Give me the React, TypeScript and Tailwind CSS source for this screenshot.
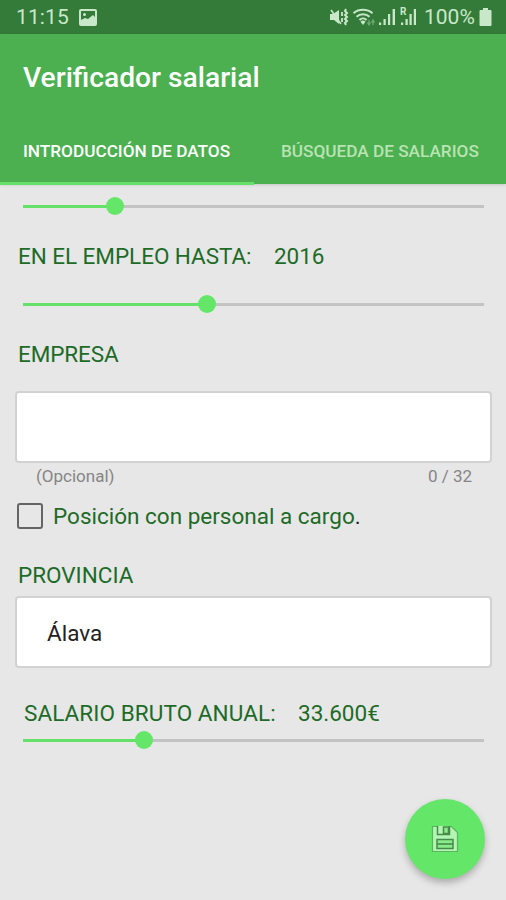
import React from 'react';

type SliderProps = {
  value: number;
  className?: string;
};

/* Thin track with a round thumb, value is a percentage */
function Slider({ value, className = '' }: SliderProps) {
  return (
    <div className={`ml-[23px] mr-[22px] grid h-[18px] items-center ${className}`}>
      <div className="col-start-1 row-start-1 h-[3px] bg-[#c3c3c3]">
        <div className="h-full bg-[#65e069]" style={{ width: `${value}%` }} />
      </div>
      <div className="relative col-start-1 row-start-1 h-[18px]">
        <span
          className="absolute top-0 size-[18px] -translate-x-1/2 rounded-full bg-[#64e668]"
          style={{ left: `${value}%` }}
        />
      </div>
    </div>
  );
}

function StatusBar() {
  return (
    <div className="flex h-[34px] items-center bg-[#347a39] pl-4 pr-[14px] text-[#c9e8ca]">
      <span className="w-[53px] whitespace-nowrap text-[21px] leading-none tracking-[0.1px]">11:15</span>
      {/* Picture notification */}
      <svg className="ml-[10px]" width="18" height="17" viewBox="0 0 18 17" fill="none">
        <rect x="1" y="1" width="16" height="15" rx="1" stroke="currentColor" strokeWidth="2" />
        <path d="M2 11l4-2 3 1 5-4 3 3v6H2z" fill="currentColor" />
        <circle cx="5.5" cy="5.5" r="1.5" fill="currentColor" />
      </svg>

      <div className="ml-auto flex items-center">
        {/* Muted, vibrating */}
        <svg width="19" height="18" viewBox="0 0 19 18" fill="none">
          <path d="M0 6h3l6-4v14l-5-4H0z" fill="currentColor" />
          <path d="M1 2l10 14" stroke="currentColor" strokeWidth="1.6" />
          <path d="M12 4v4M12 10v4" stroke="currentColor" strokeWidth="1.8" />
          <path d="M16 1l-1 2 2 2-2 2 2 2-2 2 2 2-2 2 1 2" stroke="currentColor" strokeWidth="2" />
        </svg>
        {/* Wifi */}
        <svg className="ml-[4px]" width="23" height="18" viewBox="0 0 23 18" fill="none">
          <path
            d="M.5 5.2c5.3-4.5 13.7-4.5 19 0M3.5 8.7c3.7-3.3 9.3-3.300 13 0M6.500 12c2-2 5-2 7 0"
            stroke="currentColor"
            strokeWidth="2"
          />
          <path d="M7.5 13.7a3.6 3.6 0 0 1 5 0L10 17z" fill="currentColor" />
          <path d="M16 12v4M14.5 14.500L16 17l1.500-2.500M20 17v-4M18.500 14.500L20 12l1.500 2.500" stroke="#6fa972" strokeWidth="1.3" />
        </svg>
        {/* Mobile signal */}
        <svg className="ml-[3px]" width="17" height="18" viewBox="0 0 17 18" fill="currentColor">
          <path d="M0 14.5h2.2V17H0zM4.5 11h2.2v6H4.5zM9 6h2.2v11H9zM13.6 1H16v16h-2.4z" />
        </svg>
        {/* Roaming signal */}
        <div className="relative ml-[4px] h-[18px] w-[17px]">
          <svg width="17" height="18" viewBox="0 0 17 18" fill="currentColor">
            <path d="M1 14.5h2.2V17H1zM5.5 11h2.2v6H5.5zM9.5 6h2.2v11H9.5zM13.8 1H16v16h-2.2z" />
          </svg>
          <span className="absolute -top-px left-0 text-[10px] font-bold leading-none">R</span>
        </div>
        <span className="ml-[7px] w-[51px] whitespace-nowrap text-[21px] leading-none">100%</span>
        {/* Battery */}
        <svg className="ml-[4px]" width="13" height="18" viewBox="0 0 13 18" fill="currentColor">
          <path d="M4 0h5v2h2.5a1 1 0 0 1 1 1v14a1 1 0 0 1-1 1h-10a1 1 0 0 1-1-1V3a1 1 0 0 1 1-1H4z" />
        </svg>
      </div>
    </div>
  );
}

function Header() {
  return (
    <header className="h-[150px] bg-[#4caf50] shadow-[0_1px_3px_rgba(0,0,0,0.15)]">
      <h1 className="pl-[23px] pt-[27px] text-[28.2px] font-medium leading-[34px] text-white">
        Verificador salarial
      </h1>
      <nav className="mt-[23px] flex h-[67px] text-[17.2px] font-medium leading-[66px]">
        <div className="w-[254px] whitespace-nowrap border-b-[3px] border-[#65e069] pl-[23px] text-white">
          INTRODUCCIÓN DE DATOS
        </div>
        <div className="flex-1 whitespace-nowrap pl-[27px] text-[#b9e3b3]">BÚSQUEDA DE SALARIOS</div>
      </nav>
    </header>
  );
}

function SaveButton() {
  return (
    <button
      aria-label="Guardar"
      className="absolute left-[405px] top-[799px] flex size-[80px] items-center justify-center rounded-full bg-[#64e668] shadow-[0_4px_7px_rgba(0,0,0,0.25)]"
    >
      <svg width="28" height="28" viewBox="0 0 28 28" fill="none">
        <path d="M1.500 1.5h19l6 6V26.5h-25z" fill="#b5f5b4" stroke="#58b45d" strokeWidth="1.2" />
        <path d="M6.500 1v8.500h12V1" fill="#b5f5b4" stroke="#458b4a" strokeWidth="1.5" />
        <path d="M12.500 2h5v6.500h-5z" fill="#8bea8b" stroke="#458b4a" strokeWidth="1.5" />
        <path d="M6 14.500h16v9H6z" fill="#8bea8b" stroke="#458b4a" strokeWidth="1.5" />
        <path d="M6 19h16" stroke="#458b4a" strokeWidth="1.6" />
      </svg>
    </button>
  );
}

export default function App() {
  return (
    <div className="relative h-[900px] w-[506px] overflow-hidden bg-[#e7e7e7] font-[Roboto,sans-serif] text-[22.5px] text-[#1d6b27]">
      <StatusBar />
      <Header />

      <main>
        <Slider value={20} className="mt-[13px]" />

        <div className="mt-[26px] flex pl-[18px] leading-[30px] tracking-[-0.05px]">
          <span className="w-[256px]">EN EL EMPLEO HASTA:</span>
          <span>2016</span>
        </div>
        <Slider value={40} className="mt-[24px]" />

        <div className="mt-[26px] pl-[18px] leading-[30px] tracking-[-0.1px]">EMPRESA</div>
        <div className="ml-[15px] mt-[22px] h-[72px] w-[477px] rounded-[4px] border-2 border-[#d2d2d2] bg-white" />
        <div className="flex h-[26px] justify-between pl-[36px] pr-[34px] text-[17px] leading-[26px] text-[#858585]">
          <span>(Opcional)</span>
          <span>0 / 32</span>
        </div>

        <label className="mt-[12px] flex h-[30px] items-center pl-[17px] leading-[30px]">
          <span className="size-[26px] rounded-[3px] border-2 border-[#656565]" />
          <span className="ml-[10px]">
            Posición con personal a cargo<span className="text-[#222]">.</span>
          </span>
        </label>

        <div className="mt-[29px] pl-[18px] leading-[30px]">PROVINCIA</div>
        <div className="ml-[15px] mt-[6px] h-[72px] w-[477px] rounded-[4px] border-2 border-[#d2d2d2] bg-white pl-[30px] leading-[70px] text-[#222]">
          Álava
        </div>

        <div className="mt-[30px] flex pl-[24px] leading-[30px]">
          <span className="w-[274px] tracking-[0.08px]">SALARIO BRUTO ANUAL:</span>
          <span>33.600€</span>
        </div>
        <Slider value={26.2} className="mt-[3px]" />
      </main>

      <SaveButton />
    </div>
  );
}
